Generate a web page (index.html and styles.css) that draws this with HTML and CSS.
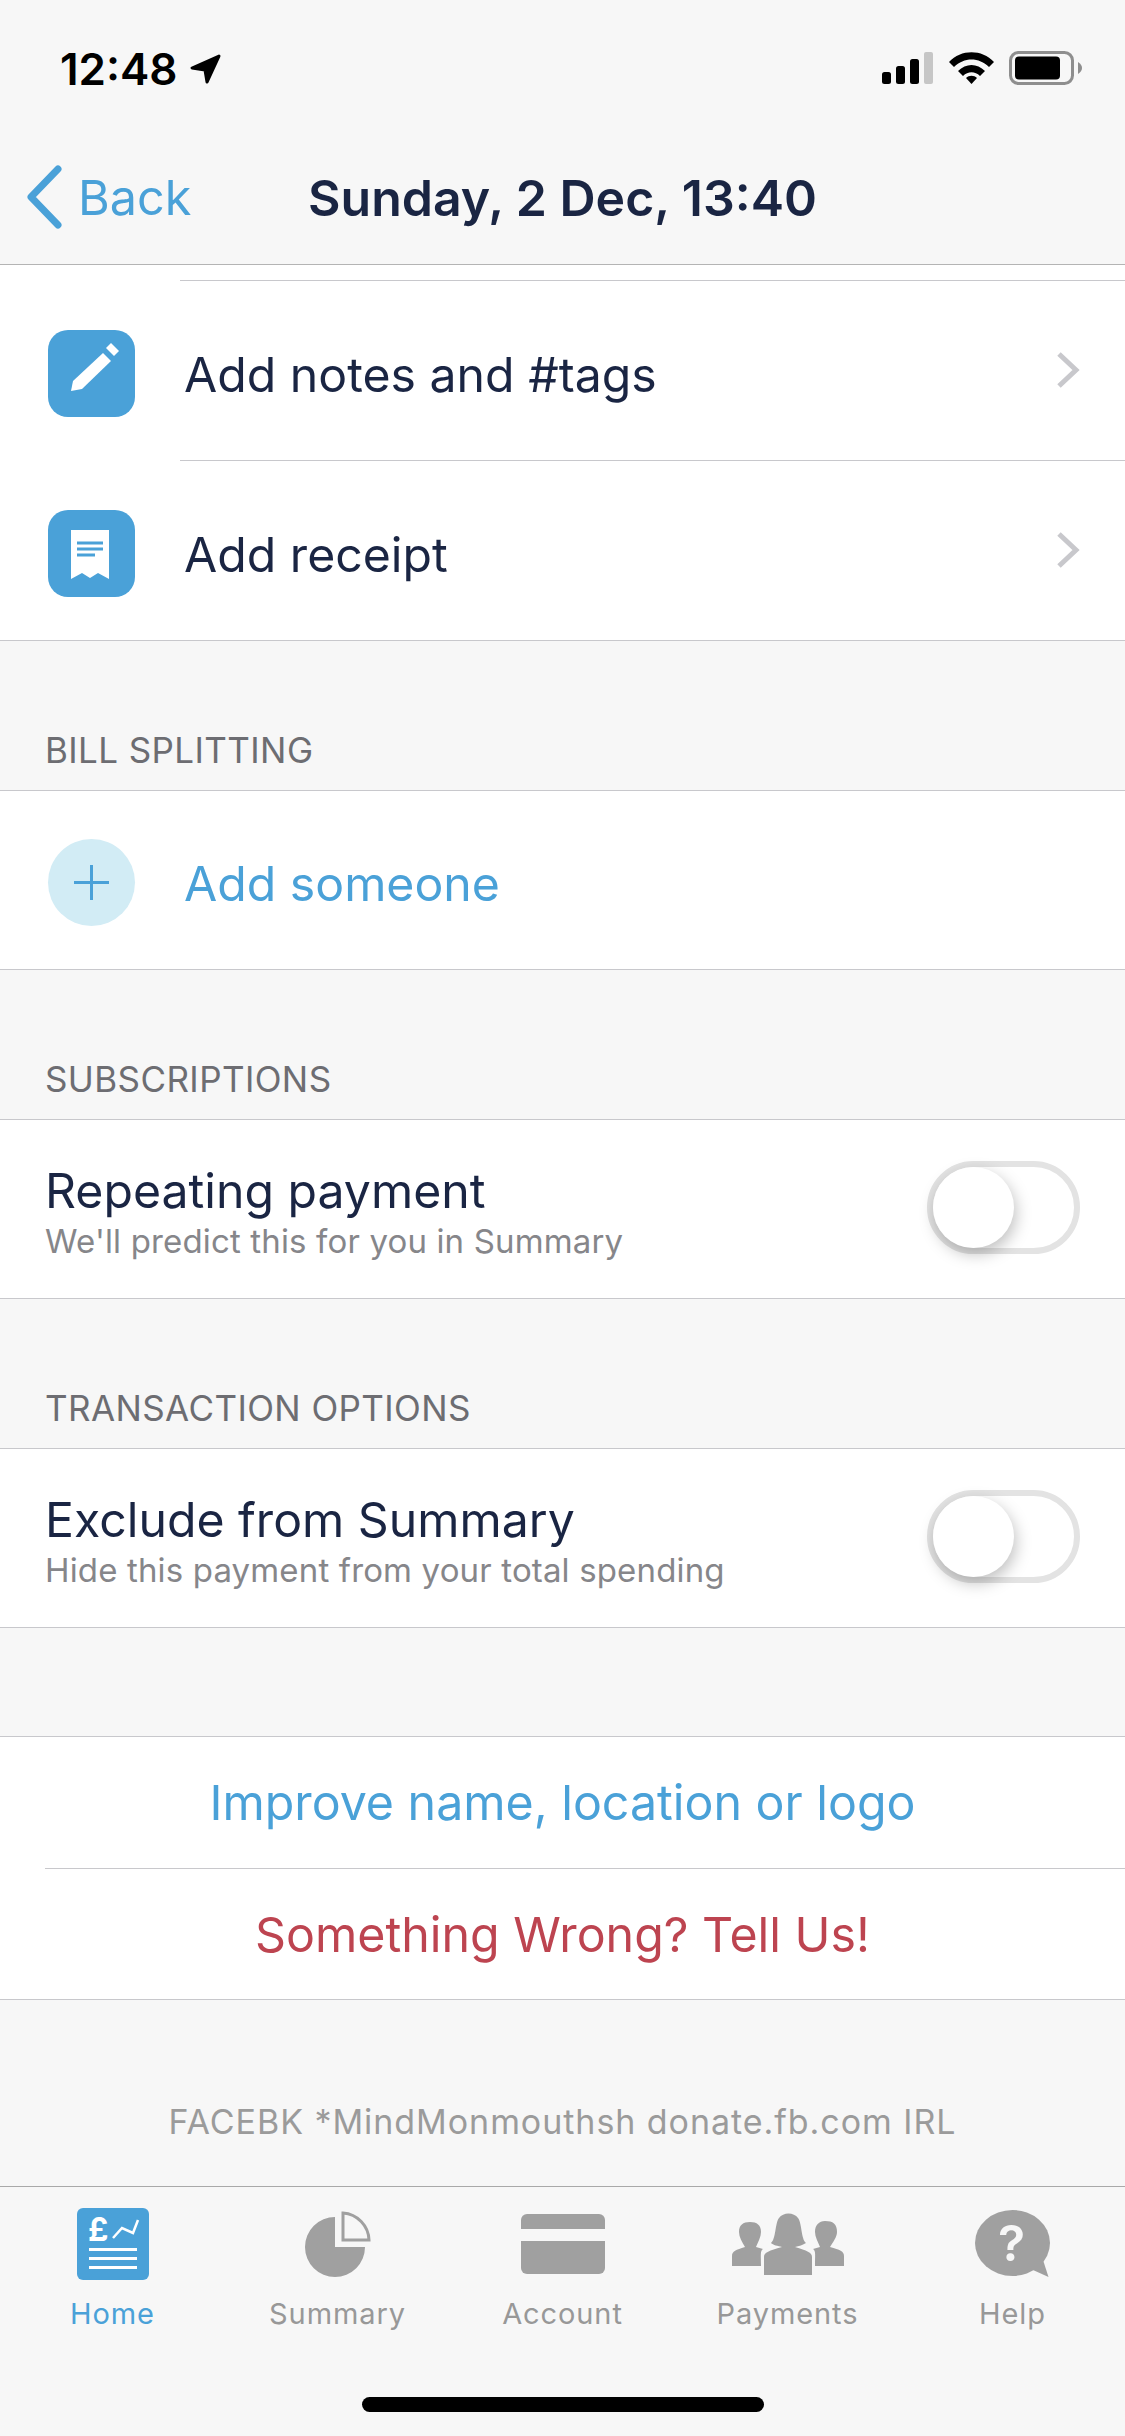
FILE: index.html
```html
<!doctype html>
<html lang="en-GB">

<head>
    <meta charset="utf-8" />
    <title>Transaction</title>

    <link rel="stylesheet" href="styles.css">
</head>

<body>
    <header class="top">
        <div class="status">
            <div class="clock">
                <span>12:48</span>
                <svg class="arrow" viewBox="0 0 31 31"><path d="M29 2 L2 14 L15 16 L17 28 Z" /></svg>
            </div>
            <div class="status-icons">
                <svg class="signal" viewBox="0 0 51 32">
                    <rect x="0" y="20" width="9" height="12" rx="2.500" />
                    <rect x="14" y="14" width="9" height="18" rx="2.500" />
                    <rect x="28" y="7" width="9" height="25" rx="2.500" />
                    <rect x="42" y="0" width="9" height="32" rx="2" fill="#c6c6c6" />
                </svg>
                <svg class="wifi" viewBox="0 0 45 33">
                    <path d="M0 10 C12 -3 33 -3 45 10 L40 15 C30 5 15 5 5 15 Z" />
                    <path d="M9 19 C17 11 28 11 36 19 L31 24 C26 19 19 19 14 24 Z" />
                    <path d="M17 26 C20 23 25 23 28 26 L22.500 32 Z" />
                </svg>
                <svg class="battery" viewBox="0 0 73 34">
                    <rect x="1.500" y="1.500" width="62" height="31" rx="8" fill="none" stroke="#8e8e8e" stroke-width="3" />
                    <rect x="6" y="5.500" width="45" height="23" rx="4" />
                    <path d="M69 11 C72 13 73 15 73 17 C73 19 72 21 69 23 Z" fill="#8e8e8e" />
                </svg>
            </div>
        </div>
        <nav class="nav">
            <div class="back">
                <svg class="back-arrow" viewBox="0 0 38 64"><path d="M33 4 L6 32 L33 60" /></svg>
                <span>Back</span>
            </div>
            <div class="nav-title">Sunday, 2 Dec, 13:40</div>
        </nav>
    </header>

    <main class="content">
        <div class="group first">
            <div class="row">
                <div class="tile">
                    <svg viewBox="0 0 87 87">
                        <path d="M23 61 L25 51 L55 23 L63 31 L34 59 Z" fill="#fff" />
                        <path d="M58 18 L63 13 L71 21 L66 26 Z" fill="#fff" />
                    </svg>
                </div>
                <div class="row-label">Add notes and #tags</div>
                <svg class="chevron" viewBox="0 0 24 38"><path d="M3 3 L20 19 L3 35" /></svg>
            </div>
            <div class="row last">
                <div class="tile">
                    <svg viewBox="0 0 87 87">
                        <path d="M23 20 H61 V69 L50 63 L42 68 L34 63 L23 69 Z" fill="#fff" />
                        <path d="M29 33 H55 M29 39 H55 M29 45 H47" stroke="#4aa1d8" stroke-width="3" />
                    </svg>
                </div>
                <div class="row-label">Add receipt</div>
                <svg class="chevron" viewBox="0 0 24 38"><path d="M3 3 L20 19 L3 35" /></svg>
            </div>
        </div>

        <h2 class="section-title">BILL SPLITTING</h2>
        <div class="group">
            <div class="row last option">
                <div class="add-circle">
                    <svg viewBox="0 0 87 87"><path d="M43.500 26 V61 M26 43.500 H61" /></svg>
                </div>
                <div class="row-label blue">Add someone</div>
            </div>
        </div>

        <h2 class="section-title">SUBSCRIPTIONS</h2>
        <div class="group">
            <div class="row last option spread">
                <div class="option-text">
                    <div class="option-name">Repeating payment</div>
                    <div class="option-hint">We'll predict this for you in Summary</div>
                </div>
                <div class="toggle"><div class="knob"></div></div>
            </div>
        </div>

        <h2 class="section-title">TRANSACTION OPTIONS</h2>
        <div class="group">
            <div class="row last option spread">
                <div class="option-text">
                    <div class="option-name">Exclude from Summary</div>
                    <div class="option-hint">Hide this payment from your total spending</div>
                </div>
                <div class="toggle"><div class="knob"></div></div>
            </div>
        </div>

        <div class="group links">
            <div class="link blue">Improve name, location or logo</div>
            <div class="link red">Something Wrong? Tell Us!</div>
        </div>

        <p class="merchant">FACEBK *MindMonmouthsh donate.fb.com IRL</p>
    </main>

    <footer class="tabs">
        <div class="tab active">
            <div class="tab-icon">
                <svg class="icon-home" viewBox="0 0 72 72">
                    <rect width="72" height="72" rx="6" fill="#4aa1d8" />
                    <text x="11" y="33" class="pound">£</text>
                    <path d="M36 30 L45 20 L56 25 L61 12" fill="none" stroke="#fff" stroke-width="2.500" />
                    <path d="M12 41.500 H60 M12 50.500 H60 M12 59.500 H60" stroke="#fff" stroke-width="3" />
                </svg>
            </div>
            <span>Home</span>
        </div>
        <div class="tab">
            <div class="tab-icon">
                <svg class="icon-summary" viewBox="0 0 66 66">
                    <path d="M30 6 V36 H60 A30 30 0 1 1 30 6 Z" fill="#a0a0a0" />
                    <path d="M38 2 A28 28 0 0 1 64 29 H38 Z" fill="none" stroke="#a0a0a0" stroke-width="3" />
                </svg>
            </div>
            <span>Summary</span>
        </div>
        <div class="tab">
            <div class="tab-icon">
                <svg class="icon-account" viewBox="0 0 84 60">
                    <path d="M6 0 H78 A6 6 0 0 1 84 6 V15 H0 V6 A6 6 0 0 1 6 0 Z" fill="#a0a0a0" />
                    <path d="M0 27 H84 V54 A6 6 0 0 1 78 60 H6 A6 6 0 0 1 0 54 Z" fill="#a0a0a0" />
                </svg>
            </div>
            <span>Account</span>
        </div>
        <div class="tab">
            <div class="tab-icon">
                <svg class="icon-payments" viewBox="0 0 112 62">
                    <path d="M0 53 V43 C0 38 4 37 13 34 C10 29 7 24 7 19 C7 12 11 9 18 9 C25 9 29 12 29 19 C29 24 26 29 24 34 L31 36 C28 38 29 42 29 53 Z" fill="#a0a0a0" />
                    <path d="M112 53 V43 C112 38 108 37 98 34 C101 29 105 24 105 19 C105 11 101 8 93 8 C87 8 83 12 83 19 C83 24 86 29 88 34 L81 36 C84 38 83 42 83 53 Z" fill="#a0a0a0" />
                    <path d="M32 62 V44 C32 39 37 38 50 34 C46 33 41 32 39 30 C44 26 43 10 47 5 C51 -1 62 -1 66 5 C70 10 69 26 74 30 C71 32 67 33 63 34 C75 38 80 39 80 44 V62 Z" fill="#a0a0a0" />
                </svg>
            </div>
            <span>Payments</span>
        </div>
        <div class="tab">
            <div class="tab-icon">
                <svg class="icon-help" viewBox="0 0 75 68">
                    <ellipse cx="37.500" cy="33" rx="37.500" ry="33" fill="#a0a0a0" />
                    <path d="M68 50 L73.500 67 L58 60 Z" fill="#a0a0a0" />
                    <text x="37" y="51" class="question">?</text>
                </svg>
            </div>
            <span>Help</span>
        </div>
    </footer>

    <div class="home-area"><div class="home-bar"></div></div>
</body>

</html>
```

FILE: styles.css
```css
* {
    box-sizing: border-box;
}

html,
body {
    margin: 0;
    padding: 0;
}

body {
    width: 1125px;
    height: 2436px;
    overflow: hidden;
    display: flex;
    flex-direction: column;
    background-color: #f7f7f7;
    color: #1a2543;
    font-family: Inter, "Liberation Sans", sans-serif;
}

svg {
    display: block;
}

.blue {
    color: #4aa1d8;
}

.red {
    color: #bd4450;
}

/* status bar and nav */
.top {
    height: 265px;
    border-bottom: 1px solid #b4b4b4;
}

.status {
    height: 132px;
    padding: 51px 43px 0 60px;
    display: flex;
    justify-content: space-between;
    align-items: flex-start;
}

.clock {
    display: flex;
    align-items: center;
    gap: 12px;
    font-size: 44px;
    line-height: 36px;
    font-weight: 600;
    color: #000;
}

.arrow {
    width: 31px;
    height: 31px;
}

.arrow path {
    stroke: #000;
    stroke-width: 3;
    stroke-linejoin: round;
}

.status-icons {
    display: flex;
    align-items: center;
    gap: 15.500px;
}

.signal {
    width: 51px;
    height: 32px;
}

.wifi {
    width: 45px;
    height: 33px;
}

.battery {
    width: 73px;
    height: 34px;
}

.nav {
    position: relative;
    height: 132px;
    display: flex;
    align-items: center;
    justify-content: center;
}

.back {
    position: absolute;
    left: 25px;
    top: 33px;
    display: flex;
    align-items: center;
    gap: 15px;
    font-size: 48.500px;
    color: #4aa1d8;
}

.back-arrow {
    width: 38px;
    height: 64px;
}

.back-arrow path {
    fill: none;
    stroke: #4aa1d8;
    stroke-width: 7;
    stroke-linecap: round;
    stroke-linejoin: round;
}

.nav-title {
    font-size: 50px;
    font-weight: 600;
}

/* list groups */
.content {
    flex: 1;
    display: flex;
    flex-direction: column;
}

.group {
    background-color: #fff;
    border-top: 1px solid #c8c8cc;
}

.group.first {
    border-top: 0;
    padding-top: 16px;
}

.group.first .row:first-child::before {
    content: "";
    position: absolute;
    left: 180px;
    right: 0;
    top: -1px;
    border-top: 1px solid #c8c8cc;
}

.row {
    position: relative;
    height: 180px;
    padding: 0 45px 0 48px;
    display: flex;
    align-items: center;
}

.row::after {
    content: "";
    position: absolute;
    left: 180px;
    right: 0;
    bottom: 0;
    border-bottom: 1px solid #c8c8cc;
}

.row.last::after {
    left: 0;
}

.tile {
    width: 87px;
    height: 87px;
    margin-top: 5px;
    border-radius: 20px;
    background-color: #4aa1d8;
    flex-shrink: 0;
}

.add-circle {
    width: 87px;
    height: 87px;
    margin-top: 4px;
    border-radius: 50%;
    background-color: #d2ecf5;
    flex-shrink: 0;
}

.add-circle path {
    fill: none;
    stroke: #4aa1d8;
    stroke-width: 3;
}

.row-label {
    flex: 1;
    margin-left: 49px;
    padding-top: 6px;
    font-size: 48.200px;
}

.chevron {
    width: 24px;
    height: 38px;
    margin-top: -3px;
}

.chevron path {
    fill: none;
    stroke: #c8c8cc;
    stroke-width: 5;
}

.section-title {
    height: 149px;
    margin: 0;
    padding: 0 0 6px 45px;
    display: flex;
    align-items: flex-end;
    font-size: 35px;
    font-weight: 400;
    line-height: 68px;
    letter-spacing: 0.400px;
    color: #6d6d72;
}

.row.option {
    height: 179px;
}

.row.spread {
    justify-content: space-between;
    padding: 0 45px;
}

.option-text {
    padding-top: 5px;
}

.option-name {
    font-size: 48.200px;
    line-height: 58px;
}

.option-hint {
    font-size: 33px;
    line-height: 42px;
    letter-spacing: 0.150px;
    color: #86868a;
}

.toggle {
    position: relative;
    width: 153px;
    height: 93px;
    margin-top: -4px;
    border-radius: 47px;
    border: 6px solid #e3e3e3;
}

/* knob sits over the track */
.knob {
    position: absolute;
    left: 0;
    top: 0;
    width: 81px;
    height: 81px;
    border-radius: 50%;
    background-color: #fff;
    box-shadow: 2px 6px 16px rgba(0, 0, 0, 0.25);
}

.links {
    margin-top: 108px;
    border-bottom: 1px solid #c8c8cc;
}

.link {
    height: 131px;
    display: flex;
    align-items: center;
    justify-content: center;
    font-size: 48.300px;
    margin-left: 45px;
    padding-right: 45px;
}

.link + .link {
    border-top: 1px solid #c8c8cc;
}

.merchant {
    margin: 0;
    padding-top: 102px;
    text-align: center;
    font-size: 34px;
    line-height: 40px;
    letter-spacing: 0.950px;
    color: #9b9b9b;
}

/* tab bar */
.tabs {
    height: 190px;
    border-top: 1px solid #a9a9a9;
    padding-top: 21px;
    display: grid;
    grid-template-columns: repeat(5, 225px);
}

.tab {
    display: flex;
    flex-direction: column;
    align-items: center;
    font-size: 29px;
    letter-spacing: 0.900px;
    color: #989898;
}

.tab.active {
    color: #4aa1d8;
}

.tab-icon {
    height: 72px;
    margin-bottom: 16px;
    display: flex;
    align-items: center;
    justify-content: center;
}

.icon-home {
    width: 72px;
    height: 72px;
}

.pound {
    font-size: 32px;
    font-weight: 700;
    fill: #fff;
}

.icon-summary {
    width: 66px;
    height: 66px;
}

.icon-account {
    width: 84px;
    height: 60px;
}

.icon-payments {
    width: 112px;
    height: 62px;
}

.icon-help {
    width: 75px;
    height: 68px;
}

.question {
    font-size: 50px;
    font-weight: 600;
    fill: #f7f7f7;
    text-anchor: middle;
}

.home-area {
    height: 60px;
    padding-top: 21px;
    display: flex;
    justify-content: center;
}

.home-bar {
    width: 402px;
    height: 15px;
    border-radius: 8px;
    background-color: #000;
}
```
